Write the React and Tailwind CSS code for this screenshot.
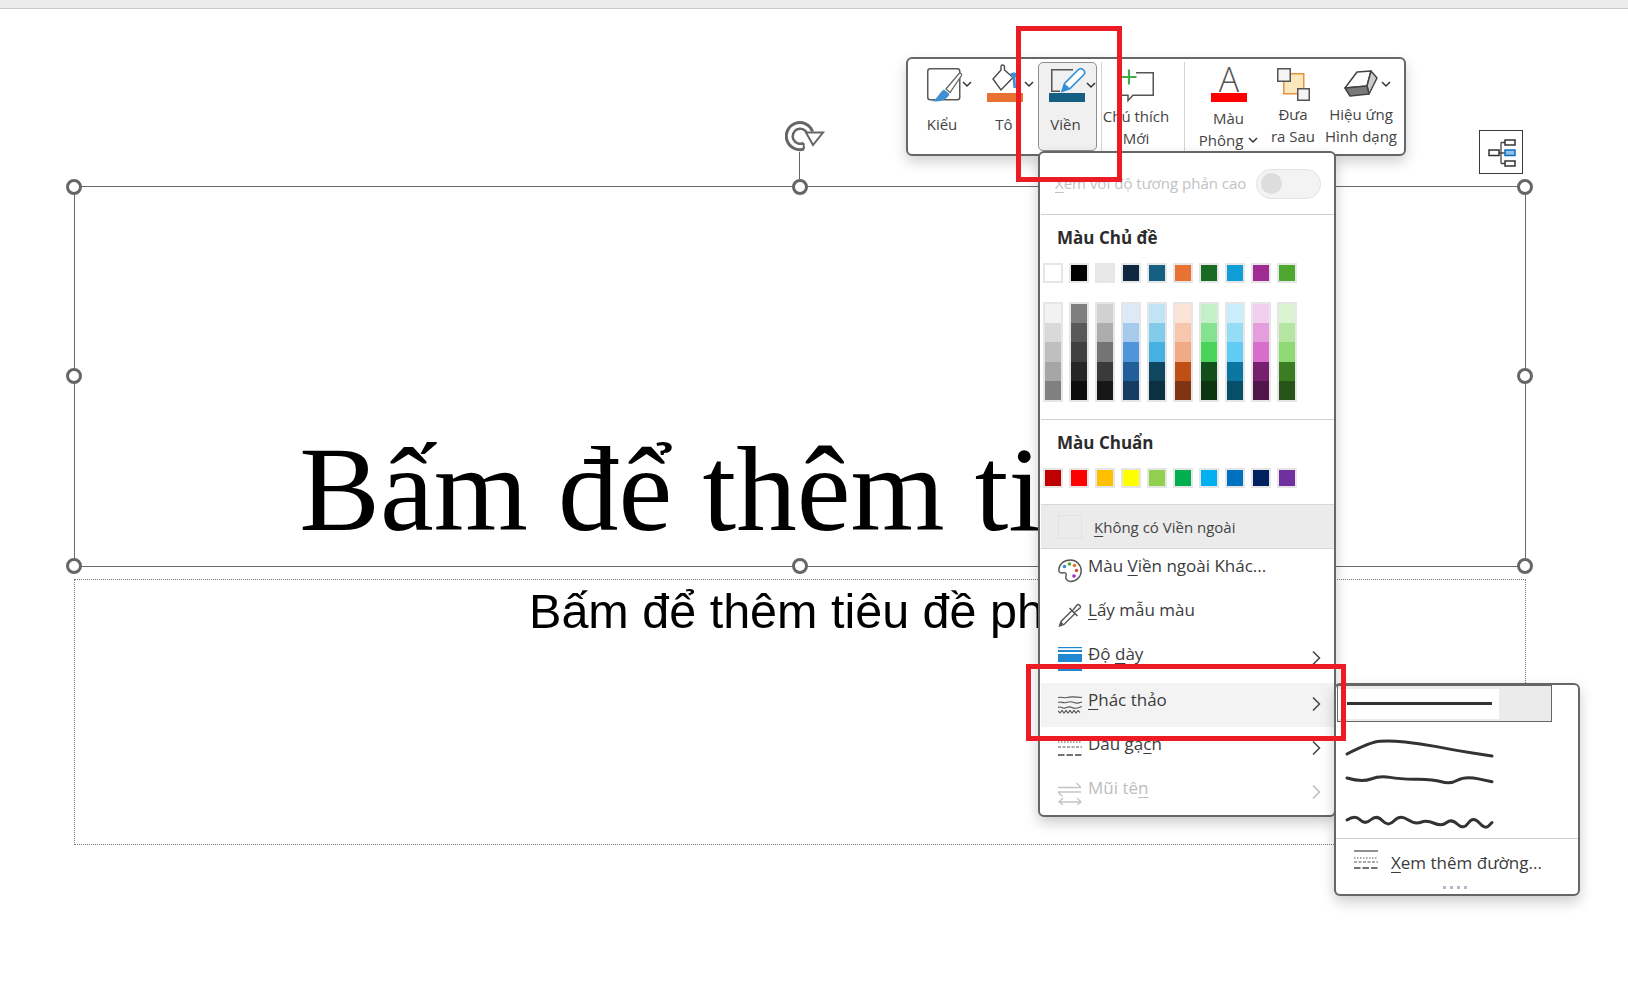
import React from 'react';

const themeColors = ['bg-[#ffffff]', 'bg-[#000000]', 'bg-[#e8e8e8]', 'bg-[#0e2841]', 'bg-[#156082]', 'bg-[#e97132]', 'bg-[#196b24]', 'bg-[#0f9ed5]', 'bg-[#a02b93]', 'bg-[#4ea72e]'];

const shades = [
  ['bg-[#f2f2f2]', 'bg-[#d9d9d9]', 'bg-[#bfbfbf]', 'bg-[#a6a6a6]', 'bg-[#808080]'],
  ['bg-[#7f7f7f]', 'bg-[#595959]', 'bg-[#404040]', 'bg-[#262626]', 'bg-[#0d0d0d]'],
  ['bg-[#d1d1d1]', 'bg-[#adadad]', 'bg-[#747474]', 'bg-[#3a3a3a]', 'bg-[#171717]'],
  ['bg-[#dceaf7]', 'bg-[#a6caec]', 'bg-[#4e95d9]', 'bg-[#215f9a]', 'bg-[#153d64]'],
  ['bg-[#c1e4f5]', 'bg-[#83cbeb]', 'bg-[#45b0e1]', 'bg-[#0f4761]', 'bg-[#0b3041]'],
  ['bg-[#fbe3d6]', 'bg-[#f6c6ad]', 'bg-[#f2aa84]', 'bg-[#c04f15]', 'bg-[#803411]'],
  ['bg-[#c2f1c8]', 'bg-[#84e291]', 'bg-[#47d459]', 'bg-[#124f1a]', 'bg-[#0d3512]'],
  ['bg-[#caedfb]', 'bg-[#95dcf7]', 'bg-[#61cbf3]', 'bg-[#0b769f]', 'bg-[#074f69]'],
  ['bg-[#f2ceef]', 'bg-[#e59edc]', 'bg-[#d86ecc]', 'bg-[#77206d]', 'bg-[#501549]'],
  ['bg-[#d9f2d0]', 'bg-[#b4e5a2]', 'bg-[#8ed973]', 'bg-[#3b7d23]', 'bg-[#275317]'],
];

const standardColors = ['bg-[#c00000]', 'bg-[#ff0000]', 'bg-[#ffc000]', 'bg-[#ffff00]', 'bg-[#92d050]', 'bg-[#00b050]', 'bg-[#00b0f0]', 'bg-[#0070c0]', 'bg-[#002060]', 'bg-[#7030a0]'];

// smooth line through hand-measured points
const smooth = (pts) => {
  let d = `M${pts[0][0]} ${pts[0][1]}`;
  for (let i = 1; i < pts.length - 1; i++) {
    const mx = (pts[i][0] + pts[i + 1][0]) / 2;
    const my = (pts[i][1] + pts[i + 1][1]) / 2;
    d += ` Q${pts[i][0]} ${pts[i][1]} ${mx} ${my}`;
  }
  const last = pts[pts.length - 1];
  return `${d} L${last[0]} ${last[1]}`;
};

const Chevron = ({ x, y = 22 }) => (
  <path d={`M${x - 4} ${y - 2}l4 4 4-4`} fill="none" stroke="#333" strokeWidth="1.5" />
);

const Handle = ({ className }) => (
  <div className={`absolute h-4 w-4 rounded-full border-[3px] border-[#666] bg-white ${className}`} />
);

const KieuIcon = () => (
  <svg width="66" height="42" viewBox="0 0 66 42">
    <rect x="18.75" y="6.75" width="32" height="31" rx="2.5" fill="#fff" stroke="#5a5a5a" strokeWidth="1.5" />
    <path d="M37 27L50 11.5c1.5-1 3 .5 2.5 2L41 30.5z" fill="#fff" stroke="#666" strokeWidth="1.3" />
    <path d="M22 39C29 38 29 31 35 27.5l5.5 4.5C38 38 31 40.5 22 39z" fill="#3f8fd2" />
    <Chevron x={58} />
  </svg>
);

const ToIcon = () => (
  <svg width="60" height="42" viewBox="0 0 60 42">
    <path d="M18 17L26 8V4.5c0-2 3-2 3.5 0V8L38 15.5 26 28z" fill="#fff" stroke="#4a4a4a" strokeWidth="1.4" />
    <path d="M35 12c2-2 6-2 7 0 .8 1.5-.5 2.5-1.5 3.5L41 26h-2.5L37.500 16z" fill="#3f8fd2" />
    <rect x="12" y="31" width="36" height="9" fill="#e97132" />
    <Chevron x={54} />
  </svg>
);

const VienIcon = () => (
  <svg width="57" height="42" viewBox="0 0 57 42">
    <path d="M34 6.750H12.750V28.250H21" fill="none" stroke="#555" strokeWidth="1.5" />
    <path d="M23 28.500l2.500-8L39 7c2-2 4-1.500 5.500 0s1.500 3.500 0 5L31 25.500z" fill="#fff" stroke="#2f8fd8" strokeWidth="1.6" />
    <path d="M23 28.500l2.500-8 5.500 5z" fill="#2f8fd8" />
    <rect x="10" y="30" width="36" height="9" fill="#156082" />
    <Chevron x={52} />
  </svg>
);

const ChuThichIcon = () => (
  <svg width="64" height="42" viewBox="0 0 64 42">
    <path d="M32 10.750H49.250V33.250H29L24 38.500V33.250H16V24" fill="#fff" stroke="#555" strokeWidth="1.5" />
    <path d="M25 7.500V22.500M17.500 15H32.500" fill="none" stroke="#3fae49" strokeWidth="2.2" />
  </svg>
);

const MauIcon = () => (
  <svg width="86" height="42" viewBox="0 0 86 42" className="overflow-visible">
    <text x="43" y="30" textAnchor="middle" fontSize="34" fill="#555" className="font-['Open_Sans'] font-light">A</text>
    <rect x="25" y="31" width="36" height="9" fill="#ff0000" />
  </svg>
);

const DuaIcon = () => (
  <svg width="42" height="42" viewBox="0 0 42 42">
    <rect x="11.750" y="11.750" width="20" height="20" fill="#fde7bf" stroke="#e8913a" strokeWidth="1.5" />
    <rect x="5.750" y="6.750" width="12.500" height="12.500" fill="#f5f5f5" stroke="#555" strokeWidth="1.5" />
    <rect x="25.750" y="26.750" width="11.500" height="11.500" fill="#f5f5f5" stroke="#555" strokeWidth="1.5" />
  </svg>
);

const HieuUngIcon = () => (
  <svg width="86" height="42" viewBox="0 0 86 42">
    <path d="M27 26L39 10l14-1-4 15z" fill="#fff" stroke="#444" strokeWidth="1.5" strokeLinejoin="round" />
    <path d="M53 9l6 7-8 16-2-8z" fill="#ccc" stroke="#444" strokeWidth="1.5" strokeLinejoin="round" />
    <path d="M27 26l22-2 2 8-19 2z" fill="#7a7a7a" stroke="#444" strokeWidth="1.5" strokeLinejoin="round" />
    <Chevron x={68} />
  </svg>
);

const MenuChevron = ({ stroke = '#444' }) => (
  <svg width="9" height="14" viewBox="0 0 9 14" className="mb-[3px] shrink-0">
    <path d="M1 .5L7.500 7 1 13.500" fill="none" stroke={stroke} strokeWidth="1.5" />
  </svg>
);

const PaletteIcon = () => (
  <svg width="24" height="24" viewBox="0 0 24 24">
    <path d="M12.500 1C5.500 1 .8 5.500.8 11c0 2.800 2.200 3.500 4.400 2.800 2.200-.6 3.800.6 2.800 3-.9 2.200.5 5.700 4.700 5.700 6 0 10.500-5 10.500-10.800S18.500 1 12.500 1z" fill="#fff" stroke="#555" strokeWidth="1.4" />
    <circle cx="6.500" cy="7.500" r="1.800" fill="#2f8fd8" />
    <circle cx="11.500" cy="5" r="1.800" fill="#4ea72e" />
    <circle cx="16.500" cy="6.500" r="1.800" fill="#e97132" />
    <circle cx="18.500" cy="11.500" r="1.800" fill="#e0503a" />
    <circle cx="16" cy="17" r="1.800" fill="#a02bc3" />
  </svg>
);

const DropperIcon = () => (
  <svg width="24" height="24" viewBox="0 0 24 24">
    <path d="M1.500 23L3 18.500 14 7.500l3 3L6 21.500z" fill="#fff" stroke="#555" strokeWidth="1.4" />
    <path d="M1.500 23L3 18.500l2.500 2.500z" fill="#555" />
    <path d="M11.500 5l8 8" stroke="#555" strokeWidth="1.6" />
    <path d="M15 7l4-5c1.500-1.500 4.500 1 3 3l-5 4" fill="#fff" stroke="#555" strokeWidth="1.4" />
  </svg>
);

const ThicknessIcon = () => (
  <svg width="24" height="24" viewBox="0 0 24 24">
    <rect y="0" width="24" height="1.200" fill="#2088d0" />
    <rect y="3" width="24" height="2" fill="#2088d0" />
    <rect y="7" width="24" height="8" fill="#2088d0" />
    <rect y="20" width="24" height="4" fill="#2088d0" />
  </svg>
);

const SketchIcon = () => (
  <svg width="24" height="18" viewBox="0 0 24 18">
    <path d="M0 1.500C4 .5 6 2.500 9 1.500S15 .5 24 1.500" fill="none" stroke="#555" strokeWidth="1.100" />
    <path d="M0 6.500c3-1.500 5 1 8 0s5-1.500 8 0 5 .5 8-.5" fill="none" stroke="#555" strokeWidth="1.100" />
    <path d="M0 11.500c3-2 4 1.500 7 .5s4-2 7-.5 6 1 10-1" fill="none" stroke="#555" strokeWidth="1.100" />
    <path d="M0 15l2 2 2-2.500 2 2.500 2-2.500 2 2.500 2-2.500 2 2.500 2-2.500 2 2.500 2-2.500 2 2" fill="none" stroke="#555" strokeWidth="1.100" />
  </svg>
);

const DashIcon = ({ top = false }) => (
  <svg width="24" height={top ? 20 : 16} viewBox={top ? '0 0 24 20' : '0 0 24 16'}>
    {top && <path d="M0 1H24" stroke="#444" strokeWidth="1.200" />}
    <path d={top ? 'M0 8H24' : 'M0 1H24'} stroke="#555" strokeWidth="1.200" strokeDasharray="1.500 1.500" />
    <path d={top ? 'M0 12H24' : 'M0 6H24'} stroke="#555" strokeWidth="1.200" strokeDasharray="3 1.500" />
    <path d={top ? 'M0 18H24' : 'M0 14H24'} stroke="#444" strokeWidth="1.400" strokeDasharray="6.500 2" />
  </svg>
);

const ArrowIcon = () => (
  <svg width="24" height="24" viewBox="0 0 24 24">
    <path d="M0 6.500H23M18.500 2L23 6.500M0 11H23M0 11L4.500 15.500" fill="none" stroke="#c4c4c4" strokeWidth="1.300" />
    <path d="M1 21H23M5 17L1 21l4 3M19 17l4 4-4 3" fill="none" stroke="#c4c4c4" strokeWidth="1.300" />
  </svg>
);

const ToolColumn = ({ className, icon, children }) => (
  <div className={`flex flex-col items-center pt-[3px] text-[15px] leading-[22px] text-[#444] ${className}`}>
    {icon}
    {children}
  </div>
);

const MenuRow = ({ icon, children, arrow, disabled, className = '' }) => (
  <div className={`flex h-[44px] items-center pl-[17px] pr-[13px] ${className}`}>
    <div className="flex w-[24px] shrink-0 justify-center">{icon}</div>
    <div className={`ml-[6px] mb-[10px] flex-1 whitespace-nowrap text-[17px] leading-[22px] ${disabled ? 'text-[#bdbdbd]' : 'text-[#3c3c3c]'}`}>
      {children}
    </div>
    {arrow && <MenuChevron stroke={disabled ? '#bdbdbd' : '#444'} />}
  </div>
);

const Key = ({ children }) => <span className="underline underline-offset-[3px] decoration-1">{children}</span>;

const line2 = [[11, 32], [34, 20], [54, 18.500], [84, 21.300], [117, 28], [156, 34]];
const line3 = [[11, 56], [26, 60.500], [44, 53.500], [64, 57.300], [97, 57], [114, 62.500], [129, 54], [156, 59.700]];
const line4 = [[11, 98], [19, 92.500], [29, 103], [40.700, 92.500], [52.300, 105], [64, 92.500], [79, 102.500], [90.700, 98], [105.700, 104.500], [115.700, 96.500], [127.300, 108], [137.300, 94], [149, 107.500], [156, 100.500]];

export default function App() {
  return (
    <div className="relative h-[981px] w-full overflow-hidden bg-white font-['Open_Sans',sans-serif]">
      {/* window edge */}
      <div className="h-[9px] border-b border-[#c8c8c8] bg-[#ececec]" />

      {/* slide placeholders */}
      <div className="relative ml-[74px] mt-[177px] flex h-[381px] w-[1452px] items-end justify-center border border-[#6a6a6a] pb-[16px]">
        <div className="whitespace-nowrap font-['Liberation_Serif',serif] text-[121px] leading-none text-black">
          Bấm để thêm tiêu đề
        </div>
        <Handle className="-left-[9px] -top-[8px]" />
        <Handle className="left-[717px] -top-[8px]" />
        <Handle className="-right-[8px] -top-[8px]" />
        <Handle className="-left-[9px] top-[181px]" />
        <Handle className="-right-[8px] top-[181px]" />
        <Handle className="-left-[9px] -bottom-[8px]" />
        <Handle className="left-[717px] -bottom-[8px]" />
        <Handle className="-right-[8px] -bottom-[8px]" />
        <div className="absolute left-[724px] -top-[35px] h-[27px] w-px bg-[#666]" />
      </div>
      <div className="ml-[74px] mt-[12px] flex h-[266px] w-[1452px] justify-center border border-dotted border-[#777] pt-[7px]">
        <div className="whitespace-nowrap font-['Liberation_Sans',sans-serif] text-[48.500px] leading-none text-black">
          Bấm để thêm tiêu đề phụ
        </div>
      </div>

      {/* rotate handle */}
      <svg width="42" height="32" viewBox="0 0 42 32" className="absolute left-[785px] top-[121px]">
        <path d="M27.500 10.500A13.500 13.500 0 1 0 19 28" fill="none" stroke="#666" strokeWidth="3" />
        <path d="M22 12A7.500 7.500 0 1 0 18.500 22" fill="none" stroke="#666" strokeWidth="2.500" />
        <path d="M18.500 22L19 28" fill="none" stroke="#666" strokeWidth="2" />
        <path d="M21 11.500H38L28 24z" fill="#fff" stroke="#666" strokeWidth="2" />
      </svg>

      {/* layout button */}
      <div className="absolute left-[1479px] top-[130px] h-[44px] w-[44px] border border-[#3a3a3a] bg-white">
        <svg width="42" height="42" viewBox="0 0 42 42">
          <path d="M19 22H25M21 11.500V32.500M21 11.500H25M21 32.500H25" fill="none" stroke="#444" strokeWidth="1.300" />
          <rect x="9" y="19" width="10" height="5.500" fill="#fff" stroke="#333" strokeWidth="1.500" />
          <rect x="25" y="9" width="10" height="5" fill="#fff" stroke="#333" strokeWidth="1.500" />
          <rect x="25" y="19" width="10" height="5.500" fill="#8fc0e8" stroke="#0f6cbd" strokeWidth="1.500" />
          <rect x="25" y="30" width="10" height="5" fill="#fff" stroke="#333" strokeWidth="1.500" />
        </svg>
      </div>

      {/* mini toolbar */}
      <div className="absolute left-[906px] top-[57px] flex h-[99px] w-[500px] rounded-[6px] border-2 border-[#666] bg-white pl-px shadow-[0_6px_14px_rgba(0,0,0,0.18)]">
        <ToolColumn className="w-[66px]" icon={<KieuIcon />}>
          <div className="pt-[9px]">Kiểu</div>
        </ToolColumn>
        <ToolColumn className="w-[60px]" icon={<ToIcon />}>
          <div className="pt-[9px] pr-[2px]">Tô</div>
        </ToolColumn>
        <div className="ml-[3px] mt-[3px] flex h-[89px] w-[59px] flex-col items-center rounded-[5px] border border-[#8f8f8f] bg-[#f0f0f0] text-[15px] leading-[22px] text-[#444]">
          <VienIcon />
          <div className="pt-[8px] pr-[4px]">Viền</div>
        </div>
        <div className="ml-[4px] mt-[3px] h-[89px] w-px bg-[#d4d4d4]" />
        <ToolColumn className="ml-[2px] w-[64px]" icon={<ChuThichIcon />}>
          <div className="whitespace-nowrap pt-px text-center">
            Chú thích
            <br />
            Mới
          </div>
        </ToolColumn>
        <div className="ml-[16px] mt-[3px] h-[89px] w-px bg-[#d4d4d4]" />
        <ToolColumn className="w-[87px]" icon={<MauIcon />}>
          <div className="whitespace-nowrap pt-[3px] text-center">
            Màu
            <br />
            <span className="inline-flex items-center gap-[5px]">
              Phông
              <svg width="10" height="7" viewBox="0 0 10 7">
                <path d="M1 1l4 4 4-4" fill="none" stroke="#333" strokeWidth="1.500" />
              </svg>
            </span>
          </div>
        </ToolColumn>
        <ToolColumn className="w-[42px]" icon={<DuaIcon />}>
          <div className="-mt-px whitespace-nowrap text-center">
            Đưa
            <br />
            ra Sau
          </div>
        </ToolColumn>
        <ToolColumn className="ml-[4px] w-[86px]" icon={<HieuUngIcon />}>
          <div className="-mt-px whitespace-nowrap text-center">
            Hiệu ứng
            <br />
            Hình dạng
          </div>
        </ToolColumn>
      </div>

      {/* outline menu */}
      <div className="absolute left-[1038px] top-[151px] w-[298px] rounded-[6px] border-2 border-[#666] bg-white pl-px shadow-[0_6px_14px_rgba(0,0,0,0.2)]">
        <div className="flex h-[61px] items-center justify-between pl-[14px] pr-[13px]">
          <span className="whitespace-nowrap text-[15px] text-[#c2c2c2]">
            <Key>X</Key>em với độ tương phản cao
          </span>
          <div className="flex h-[30px] w-[65px] items-center rounded-full border border-[#e2e2e2] bg-[#f3f3f3] pl-[4px]">
            <div className="h-[21px] w-[21px] rounded-full bg-[#dddddd]" />
          </div>
        </div>

        <div className="border-t border-[#d0d0d0] pl-[2px]">
          <div className="flex h-[46px] items-center pl-[14px] text-[17px] font-bold text-[#2b2b2b]">Màu Chủ đề</div>
          <div className="mt-[2px] flex gap-[6px]">
            {themeColors.map((c) => (
              <div key={c} className={`h-5 w-5 border-2 border-[#e6e6e6] ${c}`} />
            ))}
          </div>
          <div className="mt-[19px] mb-[17px] flex gap-[6px]">
            {shades.map((col) => (
              <div key={col[2]} className="flex h-[100px] w-5 flex-col border-2 border-[#e6e6e6]">
                {col.map((c) => (
                  <div key={c} className={`flex-1 ${c}`} />
                ))}
              </div>
            ))}
          </div>
        </div>

        <div className="border-t border-[#d0d0d0] pl-[2px]">
          <div className="flex h-[45px] items-center pl-[14px] text-[17px] font-bold text-[#2b2b2b]">Màu Chuẩn</div>
          <div className="mt-[3px] mb-[16px] flex gap-[6px]">
            {standardColors.map((c) => (
              <div key={c} className={`h-5 w-5 border-2 border-[#e6e6e6] ${c}`} />
            ))}
          </div>
        </div>

        <div className="flex h-[45px] items-center border-y border-[#d6d6d6] bg-[#ebebeb] pl-[17px]">
          <div className="h-[24px] w-[24px] border border-[#e2e2e2]" />
          <span className="ml-[12px] mt-[2px] whitespace-nowrap text-[15px] text-[#444]">
            <Key>K</Key>hông có Viền ngoài
          </span>
        </div>

        <MenuRow icon={<PaletteIcon />}>
          Màu <Key>V</Key>iền ngoài Khác...
        </MenuRow>
        <MenuRow icon={<DropperIcon />}>
          <Key>L</Key>ấy mẫu màu
        </MenuRow>
        <MenuRow icon={<ThicknessIcon />} arrow className="mb-[2px]">
          Độ <Key>d</Key>ày
        </MenuRow>
        <MenuRow icon={<SketchIcon />} arrow className="bg-[#f3f3f3]">
          <Key>P</Key>hác thảo
        </MenuRow>
        <MenuRow icon={<DashIcon />} arrow>
          Dấu gạ<Key>c</Key>h
        </MenuRow>
        <MenuRow icon={<ArrowIcon />} arrow disabled>
          Mũi tê<Key>n</Key>
        </MenuRow>
      </div>

      {/* sketched submenu */}
      <div className="absolute left-[1334px] top-[683px] flex h-[213px] w-[246px] flex-col rounded-[6px] border-2 border-[#666] bg-white shadow-[0_6px_14px_rgba(0,0,0,0.2)]">
        <div className="ml-px flex h-[37px] w-[215px] items-center border border-[#666] bg-[#ebebeb]">
          <div className="flex h-[30px] w-[161px] items-center bg-white pl-[9px]">
            <div className="h-[3px] w-[145px] bg-[#333]" />
          </div>
        </div>
        <svg width="242" height="116" viewBox="0 0 242 116" className="shrink-0">
          <path d={smooth(line2)} fill="none" stroke="#333" strokeWidth="3" strokeLinecap="round" />
          <path d={smooth(line3)} fill="none" stroke="#333" strokeWidth="3" strokeLinecap="round" />
          <path d={smooth(line4)} fill="none" stroke="#333" strokeWidth="3" strokeLinecap="round" />
        </svg>
        <div className="flex h-[48px] items-center border-t border-[#d0d0d0] pl-[18px]">
          <div className="mb-[6px] flex">
            <DashIcon top />
          </div>
          <span className="ml-[13px] whitespace-nowrap text-[17px] text-[#3c3c3c]">
            <Key>X</Key>em thêm đường...
          </span>
        </div>
        <div className="flex justify-center gap-[4px] pr-[4px]">
          <div className="h-[3px] w-[3px] bg-[#b4bac6]" />
          <div className="h-[3px] w-[3px] bg-[#b4bac6]" />
          <div className="h-[3px] w-[3px] bg-[#b4bac6]" />
          <div className="h-[3px] w-[3px] bg-[#b4bac6]" />
        </div>
      </div>

      {/* red annotations */}
      <div className="absolute left-[1016px] top-[26px] h-[156px] w-[106px] border-[5px] border-[#ed1c24]" />
      <div className="absolute left-[1026px] top-[664px] h-[77px] w-[320px] border-[5px] border-[#ed1c24]" />
    </div>
  );
}
